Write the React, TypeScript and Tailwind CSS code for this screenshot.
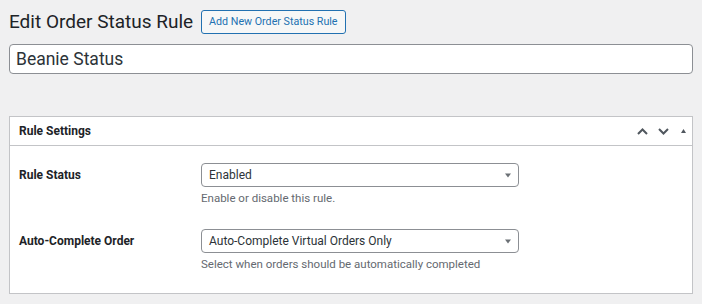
import React from "react";

const font = { fontFamily: 'Roboto, "Noto Sans", sans-serif' };

function SelectBox({ value }: { value: string }) {
  return (
    <div className="flex h-[24px] w-[318px] items-center justify-between rounded-[4px] border border-[#8c8f94] bg-white pl-[7px] pr-[6px] text-[12px] text-[#2c3338]">
      <span>{value}</span>
      <svg width="8" height="5" viewBox="0 0 8 5">
        <path d="M1 0.5 L7 0.5 L4 4.5 Z" fill="#6b7075" />
      </svg>
    </div>
  );
}

export default function App() {
  return (
    <div className="min-h-[304px] w-[702px] bg-[#f0f0f1] px-[9px] pt-[10px]" style={font}>
      <div className="flex h-[24px] items-center gap-[8px]">
        <h1 className="text-[19px] font-normal leading-[24px] text-[#1d2327]">Edit Order Status Rule</h1>
        <button className="h-[24px] rounded-[3px] border border-[#2271b1] bg-[#f6f7f7] px-[7px] text-[10.7px] leading-[22px] text-[#2271b1]">
          Add New Order Status Rule
        </button>
      </div>
      <div className="mt-[10px] flex h-[30px] items-center rounded-[4px] border border-[#8c8f94] bg-white px-[6px] text-[17.5px] text-[#2c3338]">
        Beanie Status
      </div>
      <div className="mt-[42px] border border-[#c3c4c7] bg-white">
        <div className="flex h-[29px] items-center justify-between border-b border-[#c3c4c7] pl-[9px] pr-[6px]">
          <h2 className="text-[12px] font-bold text-[#1d2327]">Rule Settings</h2>
          <div className="flex items-center">
            <svg width="11" height="7" viewBox="0 0 11 7">
              <path d="M1 6 L5.5 1.5 L10 6" fill="none" stroke="#50575e" strokeWidth="2" />
            </svg>
            <svg width="11" height="7" viewBox="0 0 11 7" className="ml-[10px]">
              <path d="M1 1 L5.5 5.5 L10 1" fill="none" stroke="#50575e" strokeWidth="2" />
            </svg>
            <svg width="5" height="4" viewBox="0 0 5 4" className="ml-[12px]">
              <path d="M0 4 L2.5 0 L5 4 Z" fill="#50575e" />
            </svg>
          </div>
        </div>
        <div className="pb-[21px] pl-[9px] pt-[17px]">
          <div className="flex">
            <div className="flex h-[24px] w-[182px] items-center text-[12px] font-bold text-[#1d2327]">Rule Status</div>
            <div>
              <SelectBox value="Enabled" />
              <p className="mt-[3px] text-[11.5px] leading-[16px] text-[#646970]">Enable or disable this rule.</p>
            </div>
          </div>
          <div className="mt-[23px] flex">
            <div className="flex h-[24px] w-[182px] items-center text-[12px] font-bold text-[#1d2327]">Auto-Complete Order</div>
            <div>
              <SelectBox value="Auto-Complete Virtual Orders Only" />
              <p className="mt-[3px] text-[11.5px] leading-[16px] text-[#646970]">Select when orders should be automatically completed</p>
            </div>
          </div>
        </div>
      </div>
    </div>
  );
}
